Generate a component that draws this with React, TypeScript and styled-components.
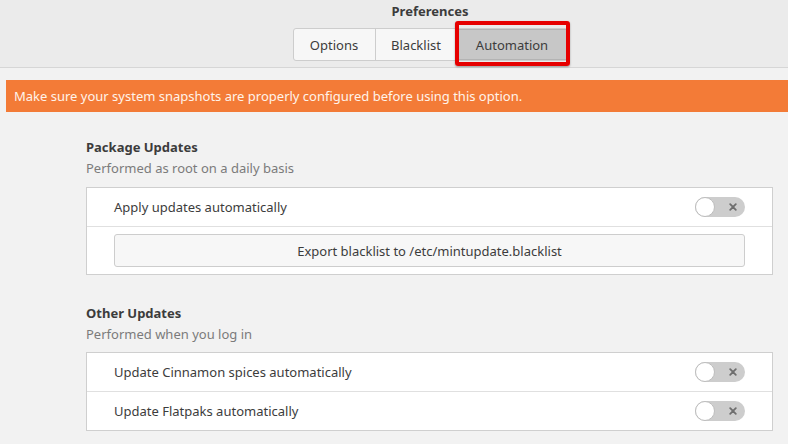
import React from "react";
import styled, { createGlobalStyle } from "styled-components";

const Global = createGlobalStyle`
  html, body { margin: 0; padding: 0; }
  body {
    font-family: "Noto Sans", "Open Sans", sans-serif;
    font-size: 13px;
    color: #3c3c3c;
    background: #f2f2f2;
  }
`;

const Window = styled.div`
  width: 788px;
  height: 444px;
  overflow: hidden;
  background: #f2f2f2;
  display: flex;
  flex-direction: column;
`;

const HeaderBar = styled.div`
  height: 67px;
  padding-left: 72px;
  background: #ebebeb;
  border-bottom: 1px solid #d6d6d6;
  display: flex;
  flex-direction: column;
  align-items: center;
`;

const Title = styled.div`
  font-weight: bold;
  line-height: 18px;
  margin-top: 2px;
  color: #3c3c3c;
`;

const Tabs = styled.div`
  display: flex;
  margin-top: 8px;
  border: 1px solid #cdcdcd;
  border-radius: 3px;
  background: #f7f7f7;
`;

const Tab = styled.div<{ $active?: boolean; $w: number }>`
  position: relative;
  width: ${(p) => p.$w}px;
  height: 31px;
  display: flex;
  align-items: center;
  justify-content: center;
  color: #3c3c3c;
  background: ${(p) => (p.$active ? "#c7c7c7" : "transparent")};
  box-shadow: ${(p) => (p.$active ? "inset 0 0 0 1px #b3b3b3" : "none")};
  & + & {
    border-left: 1px solid #cdcdcd;
  }
`;

const Highlight = styled.div`
  position: absolute;
  left: -3px;
  right: -3px;
  top: -8px;
  bottom: -6px;
  border: 4px solid #e60000;
  border-radius: 3px;
  box-shadow: 0 1px 2px rgba(0, 0, 0, 0.35);
  pointer-events: none;
`;

const Banner = styled.div`
  margin: 12px 0 0 6px;
  height: 32px;
  background: #f37b37;
  color: #fff3ea;
  display: flex;
  align-items: center;
  padding-left: 8px;
`;

const Section = styled.div<{ $top: number }>`
  margin: ${(p) => p.$top}px 15px 0 86px;
  display: flex;
  flex-direction: column;
`;

const Heading = styled.div`
  font-weight: bold;
  line-height: 18px;
  color: #3c3c3c;
`;

const Sub = styled.div`
  line-height: 18px;
  margin-top: 3px;
  color: #7b7b7b;
`;

const Frame = styled.div<{ $gap: number }>`
  margin-top: ${(p) => p.$gap}px;
  background: #fff;
  border: 1px solid #cfcfcf;
  display: flex;
  flex-direction: column;
`;

const Row = styled.div`
  height: 38px;
  display: flex;
  align-items: center;
  justify-content: space-between;
  padding: 0 27px;
  & + & {
    border-top: 1px solid #e0e0e0;
  }
`;

const ButtonRow = styled.div`
  border-top: 1px solid #e0e0e0;
  padding: 7px 27px 7px 27px;
`;

const Button = styled.div`
  height: 31px;
  border: 1px solid #cdcdcd;
  border-radius: 3px;
  background: #f7f7f7;
  display: flex;
  align-items: center;
  justify-content: center;
  color: #3c3c3c;
`;

const Track = styled.div`
  width: 50px;
  height: 20px;
  border-radius: 10px;
  background: #cdcdcd;
  position: relative;
  display: flex;
  align-items: center;
  justify-content: flex-end;
  padding-right: 8px;
  box-sizing: border-box;
`;

const Knob = styled.div`
  position: absolute;
  left: 0;
  top: 0;
  width: 18px;
  height: 18px;
  border-radius: 50%;
  background: #fff;
  border: 1px solid #bdbdbd;
`;

const Toggle = () => (
  <Track>
    <Knob />
    <svg width="8" height="8" viewBox="0 0 8 8">
      <path d="M1.2 1.2 L6.8 6.8 M6.8 1.2 L1.2 6.8" stroke="#6e6e6e" strokeWidth="1.8" strokeLinecap="round" />
    </svg>
  </Track>
);

export default function App() {
  return (
    <Window>
      <Global />
      <HeaderBar>
        <Title>Preferences</Title>
        <Tabs>
          <Tab $w={81}>Options</Tab>
          <Tab $w={81}>Blacklist</Tab>
          <Tab $w={109} $active>
            Automation
            <Highlight />
          </Tab>
        </Tabs>
      </HeaderBar>
      <Banner>Make sure your system snapshots are properly configured before using this option.</Banner>
      <Section $top={26}>
        <Heading>Package Updates</Heading>
        <Sub>Performed as root on a daily basis</Sub>
        <Frame $gap={10}>
          <Row>
            <span>Apply updates automatically</span>
            <Toggle />
          </Row>
          <ButtonRow>
            <Button>Export blacklist to /etc/mintupdate.blacklist</Button>
          </ButtonRow>
        </Frame>
      </Section>
      <Section $top={29}>
        <Heading>Other Updates</Heading>
        <Sub>Performed when you log in</Sub>
        <Frame $gap={9}>
          <Row>
            <span>Update Cinnamon spices automatically</span>
            <Toggle />
          </Row>
          <Row>
            <span>Update Flatpaks automatically</span>
            <Toggle />
          </Row>
        </Frame>
      </Section>
    </Window>
  );
}
